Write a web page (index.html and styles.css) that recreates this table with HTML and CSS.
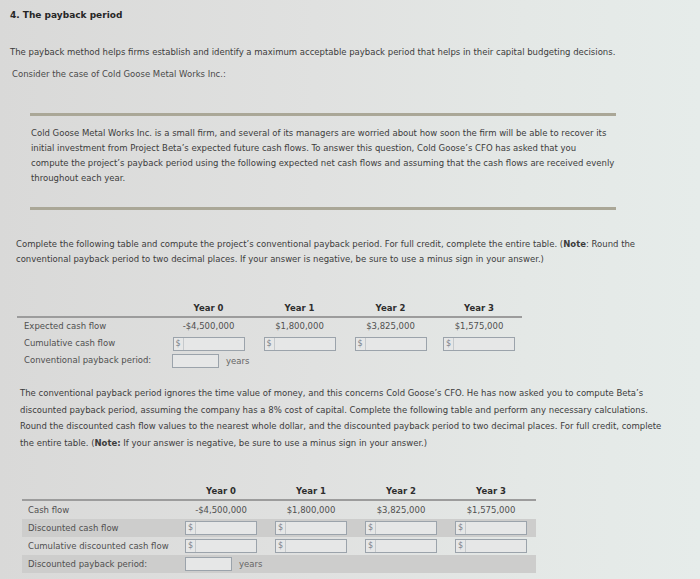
FILE: index.html
```html
<!DOCTYPE html>
<html>
<head>
<meta charset="utf-8">
<link rel="stylesheet" href="styles.css">
</head>
<body>
<div class="page">
  <h1 class="title">4. The payback period</h1>
  <p class="intro">The payback method helps firms establish and identify a maximum acceptable payback period that helps in their capital budgeting decisions.</p>
  <p class="consider">Consider the case of Cold Goose Metal Works Inc.:</p>

  <div class="case">
    <p>Cold Goose Metal Works Inc. is a small firm, and several of its managers are worried about how soon the firm will be able to recover its<br>initial investment from Project Beta’s expected future cash flows. To answer this question, Cold Goose’s CFO has asked that you<br>compute the project’s payback period using the following expected net cash flows and assuming that the cash flows are received evenly<br>throughout each year.</p>
  </div>

  <p class="instr">Complete the following table and compute the project’s conventional payback period. For full credit, complete the entire table. (<b>Note</b>: Round the<br>conventional payback period to two decimal places. If your answer is negative, be sure to use a minus sign in your answer.)</p>

  <div class="grid t1">
    <div class="hd"></div><div class="hd">Year 0</div><div class="hd">Year 1</div><div class="hd">Year 2</div><div class="hd">Year 3</div>
    <div class="lbl">Expected cash flow</div><div class="val">-$4,500,000</div><div class="val">$1,800,000</div><div class="val">$3,825,000</div><div class="val">$1,575,000</div>
    <div class="lbl">Cumulative cash flow</div>
    <div class="cell"><span class="inp"><span class="cur">$</span></span></div>
    <div class="cell"><span class="inp"><span class="cur">$</span></span></div>
    <div class="cell"><span class="inp"><span class="cur">$</span></span></div>
    <div class="cell"><span class="inp"><span class="cur">$</span></span></div>
    <div class="lbl">Conventional payback period:</div>
    <div class="cell left"><span class="inp short"></span><span class="yrs">years</span></div>
    <div class="cell"></div><div class="cell"></div><div class="cell"></div>
  </div>

  <p class="disc">The conventional payback period ignores the time value of money, and this concerns Cold Goose’s CFO. He has now asked you to compute Beta’s<br>discounted payback period, assuming the company has a 8% cost of capital. Complete the following table and perform any necessary calculations.<br>Round the discounted cash flow values to the nearest whole dollar, and the discounted payback period to two decimal places. For full credit, complete<br>the entire table. (<b>Note:</b> If your answer is negative, be sure to use a minus sign in your answer.)</p>

  <div class="grid t2">
    <div class="hd"></div><div class="hd">Year 0</div><div class="hd">Year 1</div><div class="hd">Year 2</div><div class="hd">Year 3</div>
    <div class="lbl">Cash flow</div><div class="val">-$4,500,000</div><div class="val">$1,800,000</div><div class="val">$3,825,000</div><div class="val">$1,575,000</div>
    <div class="lbl sh">Discounted cash flow</div>
    <div class="cell sh"><span class="inp"><span class="cur">$</span></span></div>
    <div class="cell sh"><span class="inp"><span class="cur">$</span></span></div>
    <div class="cell sh"><span class="inp"><span class="cur">$</span></span></div>
    <div class="cell sh"><span class="inp"><span class="cur">$</span></span></div>
    <div class="lbl">Cumulative discounted cash flow</div>
    <div class="cell"><span class="inp"><span class="cur">$</span></span></div>
    <div class="cell"><span class="inp"><span class="cur">$</span></span></div>
    <div class="cell"><span class="inp"><span class="cur">$</span></span></div>
    <div class="cell"><span class="inp"><span class="cur">$</span></span></div>
    <div class="lbl sh">Discounted payback period:</div>
    <div class="cell sh left"><span class="inp short"></span><span class="yrs">years</span></div>
    <div class="cell sh"></div><div class="cell sh"></div><div class="cell sh"></div>
  </div>
</div>
</body>
</html>
```
FILE: styles.css
```css
html, body {
  margin: 0;
  padding: 0;
}
body {
  width: 700px;
  height: 579px;
  overflow: hidden;
  background: linear-gradient(90deg, #d9d9d8 0%, #e0e1e0 45%, #e4e8e6 75%, #e6ecea 100%);
  font-family: "DejaVu Sans", Verdana, sans-serif;
  font-size: 8.5px;
  color: #3c3c3c;
}
.page {
  padding: 9px 0 0 10px;
}
p { margin: 0; white-space: nowrap; }
.title {
  margin: 0;
  font-size: 9px;
  font-weight: bold;
  color: #262626;
  line-height: 12px;
}
.intro {
  margin-top: 25px;
  line-height: 12px;
}
.consider {
  margin-top: 10px;
  margin-left: 2px;
  line-height: 12px;
  color: #4a4a4a;
}
.case {
  margin: 33px 0 0 20px;
  width: 585px;
  border-top: 3px solid #aaa797;
  border-bottom: 3px solid #aaa797;
  padding: 10px 0 21px 1px;
  line-height: 15px;
}
.instr {
  margin: 27px 0 0 6px;
  line-height: 15px;
}
.grid {
  display: grid;
  align-items: center;
}
.t1 {
  margin: 34px 0 0 7px;
  grid-template-columns: 146px 91px 91px 91px 86px;
  width: 505px;
}
.t2 {
  margin: 33px 0 0 12px;
  grid-template-columns: 154px repeat(4, 90px);
  width: 514px;
}
.hd {
  font-weight: bold;
  color: #2e2e2e;
  text-align: center;
  height: 15px;
  line-height: 15px;
  border-bottom: 2px solid #9c9c9c;
}
.lbl {
  padding-left: 7px;
  height: 17px;
  line-height: 17px;
  color: #505050;
  white-space: nowrap;
}
.val {
  text-align: center;
  height: 17px;
  line-height: 17px;
  color: #505050;
}
.cell {
  height: 17px;
  display: flex;
  align-items: center;
  justify-content: center;
}
.t2 .lbl, .t2 .val, .t2 .cell { height: 18px; line-height: 18px; }
.sh { background: #cdcdcc; }
.cell.left { justify-content: flex-start; padding-left: 9px; }
.inp {
  box-sizing: border-box;
  flex: none;
  width: 72px;
  height: 14px;
  border: 1px solid #9ba3ab;
  background: #e6e7e7;
  display: flex;
  align-items: center;
}
.cur {
  height: 100%;
  padding: 0 2px;
  border-right: 1px solid #c5c9cc;
  line-height: 12px;
  color: #7a8088;
  font-size: 8px;
}
.inp.short { width: 47px; }
.yrs {
  margin-left: 7px;
  color: #666;
  white-space: nowrap;
}
.t2 .lbl { padding-left: 6px; }
.disc {
  margin: 16px 0 0 10px;
  line-height: 16.5px;
}
```
